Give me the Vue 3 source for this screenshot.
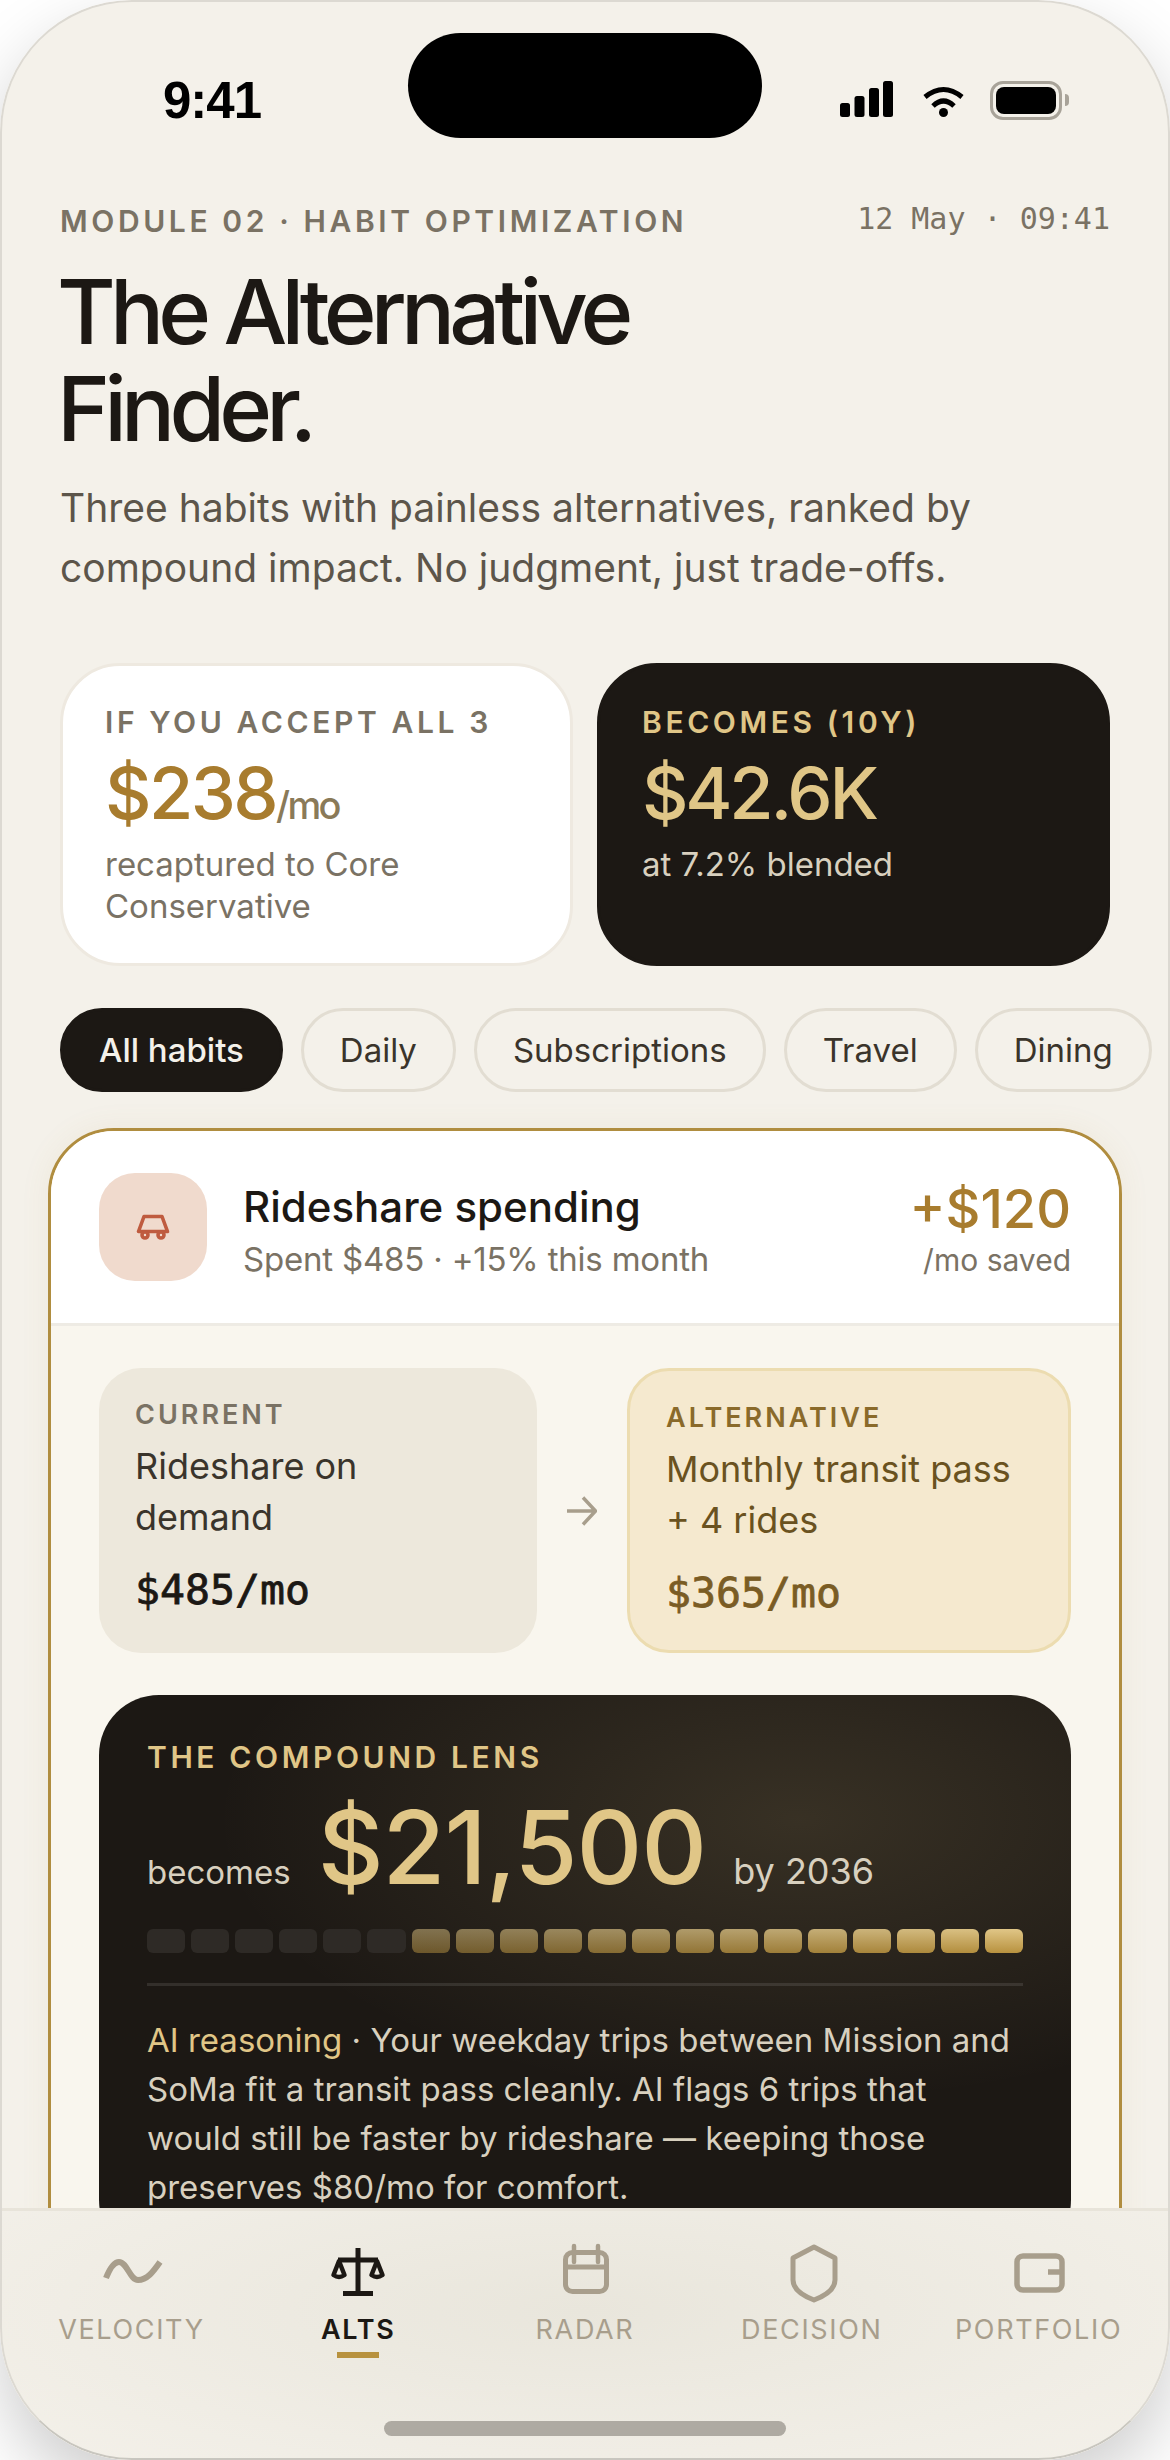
<script setup>
const pills = ['All habits', 'Daily', 'Subscriptions', 'Travel', 'Dining']

// 6 dim bars, then 14 gold ones getting brighter
const barras = Array.from({ length: 20 }, (_, i) => ({
  on: i >= 6,
  opacity: i >= 6 ? 0.5 + ((i - 6) / 13) * 0.5 : 1,
}))

const tabs = ['VELOCITY', 'ALTS', 'RADAR', 'DECISION', 'PORTFOLIO']
</script>

<template>
  <div class="phone">
    <div class="island"></div>

    <div class="status">
      <span class="hora">9:41</span>
      <div class="status-icons">
        <svg width="53" height="36" viewBox="0 0 53 36">
          <rect x="0" y="22" width="10" height="14" rx="2.5" />
          <rect x="14.5" y="15" width="10" height="21" rx="2.5" />
          <rect x="29" y="7" width="10" height="29" rx="2.5" />
          <rect x="43" y="0" width="10" height="36" rx="2.5" />
        </svg>
        <svg width="41" height="32" viewBox="0 0 41 32">
          <path d="M2 12 Q20.5 -3 39 12" fill="none" stroke="#000" stroke-width="5" />
          <path d="M10 21 Q20.5 11 31 21" fill="none" stroke="#000" stroke-width="5" />
          <circle cx="20.5" cy="27.5" r="4.5" />
        </svg>
        <div class="bateria">
          <div class="bateria-fill"></div>
          <div class="bateria-nub"></div>
        </div>
      </div>
    </div>

    <div class="contenido">
      <div class="eyebrow-row">
        <span class="eyebrow">MODULE 02 · HABIT OPTIMIZATION</span>
        <span class="fecha">12 May · 09:41</span>
      </div>
      <h1 class="titulo">The Alternative<br />Finder.</h1>
      <p class="subtitulo">Three habits with painless alternatives, ranked by compound impact. No judgment, just trade-offs.</p>

      <div class="resumen">
        <div class="res-card claro">
          <div class="res-label">IF YOU ACCEPT ALL 3</div>
          <div class="res-valor">$238<span class="res-mo">/mo</span></div>
          <div class="res-sub">recaptured to Core Conservative</div>
        </div>
        <div class="res-card oscuro">
          <div class="res-label">BECOMES (10Y)</div>
          <div class="res-valor">$42.6K</div>
          <div class="res-sub">at 7.2% blended</div>
        </div>
      </div>

      <div class="pills">
        <span v-for="(p, i) in pills" :key="p" class="pill" :class="{ activa: i === 0 }">{{ p }}</span>
      </div>
    </div>

    <div class="habito">
      <div class="habito-head">
        <div class="habito-icono">
          <svg width="34" height="26" viewBox="0 0 34 26" fill="none" stroke="#bf5b3f" stroke-width="3.6">
            <path d="M2.5 17.5 L8 2.5 H26 L31.5 17.5 Z" stroke-linejoin="round" />
            <circle cx="9" cy="21" r="3" fill="#f0dacd" />
            <circle cx="25" cy="21" r="3" fill="#f0dacd" />
          </svg>
        </div>
        <div class="habito-info">
          <div class="habito-nombre">Rideshare spending</div>
          <div class="habito-gasto">Spent $485 · +15% this month</div>
        </div>
        <div class="habito-ahorro">
          <div class="ahorro-valor">+$120</div>
          <div class="ahorro-sub">/mo saved</div>
        </div>
      </div>

      <div class="habito-body">
        <div class="compara">
          <div class="caja actual">
            <div class="caja-label">CURRENT</div>
            <div class="caja-texto">Rideshare on demand</div>
            <div class="caja-precio">$485/mo</div>
          </div>
          <svg class="flecha" width="30" height="30" viewBox="0 0 30 30" fill="none" stroke="#a89e8c" stroke-width="3.4">
            <path d="M0 15 H28 M16 1.5 L28.5 15 L16 28.5" />
          </svg>
          <div class="caja alternativa">
            <div class="caja-label">ALTERNATIVE</div>
            <div class="caja-texto">Monthly transit pass + 4 rides</div>
            <div class="caja-precio">$365/mo</div>
          </div>
        </div>

        <div class="lente">
          <div class="lente-label">THE COMPOUND LENS</div>
          <div class="lente-fila">
            <span class="lente-chico">becomes</span>
            <span class="lente-valor">$21,500</span>
            <span class="lente-chico grande">by 2036</span>
          </div>
          <div class="barras">
            <div
              v-for="(b, i) in barras"
              :key="i"
              class="barra"
              :class="{ on: b.on }"
              :style="{ opacity: b.opacity }"
            ></div>
          </div>
          <p class="razon"><span class="razon-ai">AI reasoning</span> · Your weekday trips between Mission and SoMa fit a transit pass cleanly. AI flags 6 trips that would still be faster by rideshare — keeping those preserves $80/mo for comfort.</p>
        </div>
      </div>
    </div>

    <nav class="nav">
      <div v-for="(t, i) in tabs" :key="t" class="tab" :class="{ activo: i === 1 }">
        <div class="tab-icono">
          <svg v-if="i === 0" width="60" height="60" viewBox="0 0 60 60" fill="none" stroke="#a89e8c" stroke-width="6">
            <path d="M5 34 C9 24 13 18 18 18 C26 18 29 36 37 36 C46 36 52 28 59 18" />
          </svg>
          <svg v-if="i === 1" width="60" height="60" viewBox="0 0 60 60" fill="none" stroke="#1c1814" stroke-width="5">
            <path d="M30 4 V50" />
            <path d="M15 49.5 H45" />
            <path d="M10 16 H50" />
            <path d="M11 17 L5.5 31 Q11 35 16.5 31 Z" stroke-width="4.5" stroke-linejoin="round" />
            <path d="M49 17 L43.5 31 Q49 35 54.5 31 Z" stroke-width="4.5" stroke-linejoin="round" />
          </svg>
          <svg v-if="i === 2" width="60" height="60" viewBox="0 0 60 60" fill="none" stroke="#a89e8c" stroke-width="5">
            <rect x="10.5" y="8.5" width="41" height="39" rx="7" />
            <path d="M11 23 H51" />
            <path d="M19 2 V18 M43 2 V18" stroke-width="4.5" stroke-linecap="round" />
          </svg>
          <svg v-if="i === 3" width="60" height="60" viewBox="0 0 60 60" fill="none" stroke="#a89e8c" stroke-width="5">
            <path d="M32 3 L53 14 V36 Q53 48 32 56 Q11 48 11 36 V14 Z" stroke-linejoin="round" />
          </svg>
          <svg v-if="i === 4" width="60" height="60" viewBox="0 0 60 60" fill="none" stroke="#a89e8c" stroke-width="5.5">
            <rect x="8" y="12" width="45" height="34" rx="6" />
            <path d="M39 28 H53" />
          </svg>
        </div>
        <span class="tab-label">{{ t }}</span>
        <span v-if="i === 1" class="tab-linea"></span>
      </div>
    </nav>

    <div class="home-bar"></div>
  </div>
</template>

<style>
html,
body {
  margin: 0;
  background: #fff;
}
</style>

<style scoped>
.phone {
  position: relative;
  width: 1170px;
  height: 2460px;
  overflow: hidden;
  background: #f4f1ea;
  border-radius: 132px;
  box-shadow: 0 30px 70px rgba(0, 0, 0, 0.2);
  font-family: Inter, 'Noto Sans', sans-serif;
  color: #1c1814;
}

/* thin edge of the device, drawn over the nav as well */
.phone::after {
  content: '';
  position: absolute;
  inset: 0;
  border: 2px solid #dcd9d2;
  border-bottom-color: #c8c6bf;
  border-radius: 132px;
  pointer-events: none;
}

.island {
  position: absolute;
  top: 33px;
  left: 408px;
  width: 354px;
  height: 105px;
  background: #000;
  border-radius: 53px;
}

.status {
  display: flex;
  justify-content: space-between;
  align-items: flex-end;
  height: 117px;
  padding: 0 101px 0 163px;
}

.hora {
  font-family: 'Liberation Sans', sans-serif;
  font-size: 51px;
  font-weight: 700;
  line-height: 51px;
  letter-spacing: -1px;
  color: #000;
  margin-bottom: -9px;
}

.status-icons {
  display: flex;
  align-items: flex-end;
  gap: 30px;
}

.bateria {
  position: relative;
  width: 72px;
  height: 39px;
  box-sizing: border-box;
  border: 3px solid #a8a399;
  border-radius: 13px;
  margin-left: -4px;
  margin-bottom: -3px;
  margin-right: 7px;
}

.bateria-fill {
  position: absolute;
  inset: 3px;
  background: #000;
  border-radius: 8px;
}

.bateria-nub {
  position: absolute;
  right: -10px;
  top: 10px;
  width: 4px;
  height: 12px;
  background: #a8a399;
  border-radius: 0 4px 4px 0;
}

.contenido {
  padding: 82px 60px 0;
}

.eyebrow-row {
  display: flex;
  justify-content: space-between;
  align-items: center;
  height: 44px;
}

.eyebrow {
  font-size: 30px;
  font-weight: 600;
  letter-spacing: 3.6px;
  color: #7a7264;
}

.fecha {
  font-family: 'DejaVu Sans Mono', monospace;
  font-size: 30px;
  color: #7a7264;
  margin-top: -6px;
}

.titulo {
  margin: 20px 0 0 -3px;
  font-size: 90px;
  font-weight: 500;
  line-height: 97px;
  letter-spacing: -5.8px;
  color: #1c1814;
}

.subtitulo {
  margin: 21px 0 0;
  font-size: 39px;
  line-height: 60px;
  color: #5c554a;
}

.resumen {
  display: grid;
  grid-template-columns: 1fr 1fr;
  gap: 24px;
  margin-top: 65px;
}

.res-card {
  box-sizing: border-box;
  height: 303px;
  padding: 35px 42px;
  border-radius: 60px;
  border: 3px solid #eee9e0;
}

.claro {
  background: #fff;
}

.oscuro {
  background: #1c1814;
  border-color: #1c1814;
}

.res-label {
  font-size: 30px;
  font-weight: 600;
  letter-spacing: 3.6px;
  line-height: 42px;
  color: #7a7264;
}

.oscuro .res-label {
  color: #e0c687;
}

.res-valor {
  margin-top: 8px;
  font-size: 72px;
  font-weight: 500;
  line-height: 84px;
  letter-spacing: -2.6px;
  color: #a87c2e;
}

.oscuro .res-valor {
  letter-spacing: -3.2px;
  color: #e0c687;
}

.res-mo {
  font-size: 38px;
  line-height: 1;
  color: #8a7a58;
}

.res-sub {
  margin-top: 8px;
  font-size: 33px;
  line-height: 42px;
  color: #7a7264;
}

.oscuro .res-sub {
  color: #d8d0bf;
}

.pills {
  display: flex;
  gap: 18px;
  margin-top: 42px;
  white-space: nowrap;
}

.pill {
  display: flex;
  align-items: center;
  box-sizing: border-box;
  height: 84px;
  padding: 0 36px;
  border: 3px solid #e2ddd2;
  border-radius: 42px;
  font-size: 33px;
  color: #3a342b;
}

.pill.activa {
  background: #1c1814;
  border-color: #1c1814;
  font-weight: 500;
  color: #f4f1ea;
}

.habito {
  margin: 36px 48px 0;
  border: 3px solid #b08d3f;
  border-radius: 66px;
  overflow: hidden;
  background: #f9f6ee;
  box-shadow: 0 0 30px rgba(176, 141, 63, 0.08);
}

.habito-head {
  display: flex;
  align-items: center;
  gap: 36px;
  padding: 42px 48px;
  background: #fff;
  border-bottom: 3px solid #eeebe4;
}

.habito-icono {
  display: flex;
  align-items: center;
  justify-content: center;
  flex: none;
  width: 108px;
  height: 108px;
  background: #f0dacd;
  border-radius: 36px;
}

.habito-info {
  flex: 1;
  padding-top: 5px;
}

.habito-nombre {
  font-size: 42px;
  font-weight: 500;
  line-height: 54px;
  color: #1c1814;
}

.habito-gasto {
  margin-top: 4px;
  font-size: 33px;
  line-height: 42px;
  letter-spacing: -0.2px;
  color: #7a7264;
}

.habito-ahorro {
  padding-top: 4px;
  text-align: right;
}

.ahorro-valor {
  font-size: 54px;
  font-weight: 500;
  line-height: 60px;
  color: #a87c2e;
}

.ahorro-sub {
  margin-top: 1px;
  font-size: 30px;
  line-height: 40px;
  color: #7a7264;
}

.habito-body {
  padding: 42px 48px 60px;
}

.compara {
  display: grid;
  grid-template-columns: 438px 30px 444px;
  gap: 30px;
  align-items: center;
}

.caja {
  box-sizing: border-box;
  height: 285px;
  padding: 30px 36px;
  border-radius: 42px;
  background: #ede8dc;
}

.alternativa {
  background: #f5e9cf;
  border: 3px solid #ecdcb0;
}

.caja-label {
  font-size: 27px;
  font-weight: 600;
  letter-spacing: 3px;
  line-height: 34px;
  color: #7a7264;
}

.alternativa .caja-label {
  color: #8a6a2a;
}

.caja-texto {
  margin-top: 9px;
  font-size: 36px;
  line-height: 51px;
  color: #3a342b;
}

.alternativa .caja-texto {
  color: #6a5220;
}

.caja-precio {
  margin-top: 21px;
  font-family: 'DejaVu Sans Mono', monospace;
  font-size: 41.5px;
  line-height: 52px;
  -webkit-text-stroke: 0.8px currentColor;
  color: #1c1814;
}

.alternativa .caja-precio {
  color: #7a5c24;
}

.lente {
  margin-top: 42px;
  padding: 44px 48px 48px;
  border-radius: 60px;
  background: radial-gradient(ellipse 60% 50% at 72% 22%, rgba(224, 198, 135, 0.14), transparent), #1c1814;
}

.lente-label {
  font-size: 30px;
  font-weight: 600;
  letter-spacing: 3.6px;
  line-height: 36px;
  color: #e0c687;
}

.lente-fila {
  display: flex;
  align-items: baseline;
  gap: 27px;
  margin-top: 12px;
}

.lente-chico {
  font-size: 33px;
  color: #d8d0bf;
}

.lente-chico.grande {
  font-size: 36px;
}

.lente-valor {
  font-size: 102px;
  font-weight: 500;
  letter-spacing: -1px;
  line-height: 120px;
  color: #e0c687;
}

.barras {
  display: flex;
  gap: 6px;
  margin-top: 22px;
}

.barra {
  flex: 1;
  height: 24px;
  border-radius: 6px;
  background: #2e2a26;
}

.barra.on {
  background: linear-gradient(180deg, #e0c687, #b8923f);
}

.razon {
  margin: 30px 0 0;
  padding-top: 30px;
  border-top: 3px solid rgba(255, 255, 255, 0.1);
  font-size: 33px;
  line-height: 49px;
  color: #d8d0bf;
}

.razon-ai {
  color: #e0c687;
}

.nav {
  position: absolute;
  left: 0;
  right: 0;
  bottom: 0;
  height: 252px;
  box-sizing: border-box;
  display: grid;
  grid-template-columns: repeat(5, 1fr);
  padding: 33px 18px 0;
  background: radial-gradient(ellipse 70% 90% at 50% 40%, #e9e6dc, #f4f1ea);
  border-top: 3px solid #e8e4da;
}

.tab {
  display: flex;
  flex-direction: column;
  align-items: center;
}

.tab-icono {
  height: 60px;
}

.tab-icono svg {
  overflow: visible;
}

.tab-label {
  margin-top: 9px;
  font-size: 27px;
  line-height: 34px;
  letter-spacing: 1.65px;
  color: #a89e8c;
}

.tab.activo .tab-label {
  font-weight: 600;
  color: #1c1814;
}

.tab-linea {
  width: 42px;
  height: 6px;
  margin-top: 5px;
  background: #b8923f;
}

.home-bar {
  position: absolute;
  left: 384px;
  bottom: 24px;
  width: 402px;
  height: 15px;
  background: #aeaaa2;
  border-radius: 9px;
}
</style>
